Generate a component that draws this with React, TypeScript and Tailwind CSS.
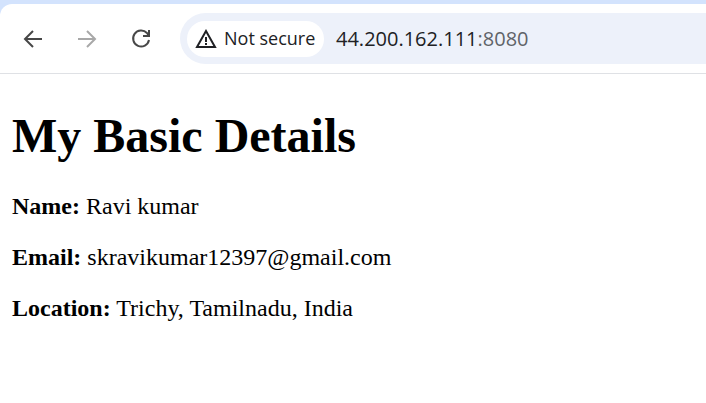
export default function App() {
  const details = [
    { label: "Name:", value: "Ravi kumar" },
    { label: "Email:", value: "skravikumar12397@gmail.com" },
    { label: "Location:", value: "Trichy, Tamilnadu, India" },
  ];
  return (
    <div className="h-[403px] w-[706px] overflow-hidden bg-[#d3e3fd] pt-[4px]">
      <div className="flex h-full flex-col rounded-tl-[12px] bg-white">
        <header className="flex h-[70px] shrink-0 items-center border-b border-[#dfe1e5] pl-[21px]">
          <nav className="flex items-center gap-[30px] text-[#474747]">
            <svg width="24" height="24" viewBox="0 0 24 24" fill="none" stroke="currentColor" strokeWidth="2"><path d="M21 12H4M12 4l-8 8 8 8" /></svg>
            <svg className="text-[#a8a8a8]" width="24" height="24" viewBox="0 0 24 24" fill="none" stroke="currentColor" strokeWidth="2"><path d="M3 12h17M12 4l8 8-8 8" /></svg>
            <svg width="24" height="24" viewBox="0 0 24 24" fill="none" stroke="currentColor" strokeWidth="2"><path d="M20 13a8 8 0 1 1-2-7l2 3M20 3v6h-6" /></svg>
          </nav>
          <div className="ml-[27px] flex h-[51px] flex-1 items-center rounded-l-full bg-[#edf1fa] pl-[7px]">
            <div className="flex h-[36px] w-[137px] items-center gap-[7px] rounded-full bg-white pl-[8px] font-['Open_Sans',sans-serif] text-[18px] text-[#202124]">
              <svg width="22" height="20" viewBox="0 0 22 20" fill="none" stroke="currentColor" strokeWidth="2"><path d="M11 2L2 18h18zM11 8v5M11 14v2" /></svg>
              <span>Not secure</span>
            </div>
            <span className="ml-[12px] font-['Open_Sans',sans-serif] text-[20px] text-[#202124]">44.200.162.111<span className="text-[#5f6368]">:8080</span></span>
          </div>
        </header>
        <main className="px-[12px] pt-[34px] font-['Liberation_Serif',serif] text-black">
          <h1 className="text-[48px] leading-[55px] font-bold">My Basic Details</h1>
          <div className="mt-[30px] flex flex-col gap-[24px] text-[24px] leading-[27px]">
            {details.map((d) => <p key={d.label}><strong>{d.label}</strong> {d.value}</p>)}
          </div>
        </main>
      </div>
    </div>
  );
}
